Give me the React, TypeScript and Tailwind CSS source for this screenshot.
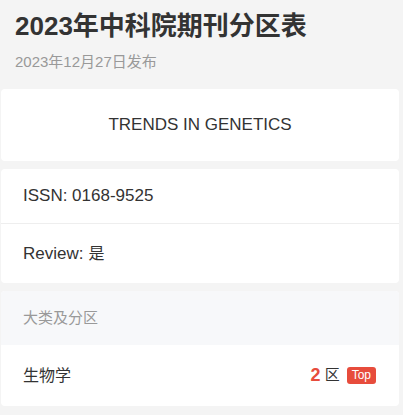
export default function App() {
  const font = {
    fontFamily: '"Liberation Sans", Arial, "Noto Sans CJK SC", sans-serif',
  };
  return (
    <div className="min-h-[415px] w-[403px] bg-[#f4f4f4] pb-2" style={font}>
      {/* header */}
      <div className="px-[15px] pt-[7px] pb-[17px]">
        <h1 className="text-[26px] font-bold leading-[38px] text-[#333]">
          2023年中科院期刊分区表
        </h1>
        <p className="mt-[7px] text-[15px] leading-[20px] text-[#999]">
          2023年12月27日发布
        </p>
      </div>

      <div className="ml-[1px] w-[398px] space-y-2">
        {/* journal name */}
        <div className="flex h-[72px] items-center justify-center rounded-[4px] bg-white">
          <span className="text-[17px] text-[#333]">TRENDS IN GENETICS</span>
        </div>

        {/* info */}
        <div className="rounded-[4px] bg-white">
          <div className="flex h-[55px] items-center border-b border-[#eee] px-[22px] text-[17px] text-[#333]">
            ISSN: 0168-9525
          </div>
          <div className="flex h-[59px] items-center px-[22px] text-[17px] text-[#333]">
            Review: <span className="ml-[5px] text-[16px]">是</span>
          </div>
        </div>

        {/* category */}
        <div className="overflow-hidden rounded-[4px] bg-white">
          <div className="flex h-[54px] items-center bg-[#f7f8fa] px-[22px] text-[15px] text-[#999]">
            大类及分区
          </div>
          <div className="flex h-[61px] items-center justify-between px-[22px] text-[16px] text-[#333]">
            <span>生物学</span>
            <div className="flex items-center pr-[1px]">
              <span className="text-[18px] font-bold text-[#e74c3c]">2</span>
              <span className="ml-[4px] text-[15px]">区</span>
              <span className="ml-[7px] rounded-[3px] bg-[#e74c3c] px-[5px] text-[12px] leading-[17px] text-white">
                Top
              </span>
            </div>
          </div>
        </div>
      </div>
    </div>
  );
}
